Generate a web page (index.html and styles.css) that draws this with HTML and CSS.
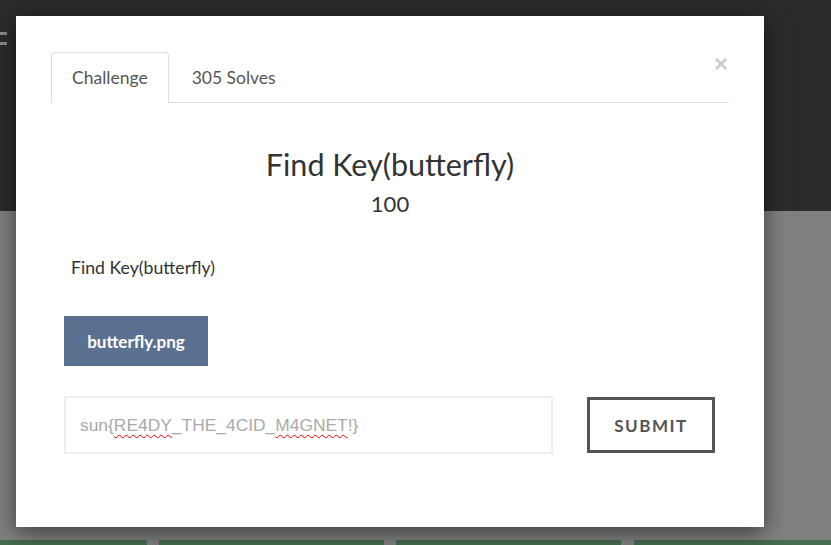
FILE: index.html
```html
<!DOCTYPE html>
<html lang="en">
<head>
<meta charset="utf-8">
<title>Find Key(butterfly)</title>
<link rel="stylesheet" href="styles.css">
</head>
<body>
<div class="page">
  <header class="navbar">
    <span class="toggle"><i class="bar"></i><i class="bar"></i></span>
  </header>
  <main class="content">
    <div class="cards">
      <div class="card c1"></div>
      <div class="card c2"></div>
      <div class="card c3"></div>
      <div class="card c4"></div>
    </div>
  </main>
</div>

<div class="modal" role="dialog">
  <button class="close" type="button" aria-label="Close">&times;</button>
  <ul class="tabs">
    <li class="tab active">Challenge</li>
    <li class="tab">305 Solves</li>
  </ul>
  <div class="tab-body">
    <h3 class="title">Find Key(butterfly)</h3>
    <h4 class="value">100</h4>
    <p class="desc">Find Key(butterfly)</p>
    <a class="file-btn" href="#">butterfly.png</a>
    <form class="answer-row">
      <div class="answer-input"><span>sun{</span><span class="typo">RE4DY</span><span>_THE_4CID_</span><span class="typo">M4GNET</span><span>!}</span></div>
      <button class="submit" type="button">SUBMIT</button>
    </form>
  </div>
</div>
</body>
</html>
```
FILE: styles.css
```css
* { box-sizing: border-box; }
html, body { margin: 0; padding: 0; }
body {
  width: 831px;
  height: 545px;
  overflow: hidden;
  position: relative;
  background: #808080;
  font-family: "Lato", "Open Sans", sans-serif;
}
.page { display: flex; flex-direction: column; height: 545px; }
.navbar {
  height: 211px;
  background: #2b2b2b;
  padding-top: 32px;
}
.toggle { display: flex; flex-direction: column; gap: 7px; width: 7px; }
.bar { display: block; height: 3px; width: 7px; background: #8a8a8a; }
.content { flex: 1; padding-top: 329px; }
.cards { display: flex; gap: 12px; }
.card { height: 5px; background: #466b4e; }
.c1 { width: 147px; }
.c2 { width: 225px; }
.c3 { width: 225px; }
.c4 { flex: 1; margin-left: 1px; }

.modal {
  position: absolute;
  left: 16px;
  top: 16px;
  width: 748px;
  height: 511px;
  background: #fff;
  box-shadow: 0 5px 22px rgba(0,0,0,0.55);
  padding: 36px 35px 0;
  color: #333;
}
.close {
  position: absolute;
  right: 36px;
  top: 36px;
  border: 0;
  background: none;
  padding: 0;
  font-family: "Liberation Sans", sans-serif;
  font-size: 24px;
  font-weight: 700;
  line-height: 24px;
  color: #cdcdcd;
}
.tabs {
  list-style: none;
  margin: 0;
  padding: 0;
  display: flex;
  height: 51px;
  border-bottom: 1px solid #ddd;
}
.tab {
  height: 51px;
  margin-bottom: -1px;
  padding: 0 20px;
  border: 1px solid transparent;
  border-radius: 4px 4px 0 0;
  font-size: 17.5px;
  line-height: 49px;
  color: #555;
  margin-right: 2px;
}
.tab.active {
  border-color: #ddd;
  border-bottom-color: #fff;
}
.tab-body { padding: 0 13px; }
.title {
  margin: 44px 0 0;
  text-align: center;
  font-size: 30.5px;
  font-weight: 400;
  line-height: 34px;
  color: #333;
}
.value {
  margin: 11px 0 0;
  text-align: center;
  font-size: 22px;
  font-weight: 400;
  line-height: 24px;
  color: #333;
}
.desc {
  margin: 42px 0 0 7px;
  font-size: 17.7px;
  line-height: 20px;
  color: #333;
}
.file-btn {
  display: inline-flex;
  align-items: center;
  justify-content: center;
  margin-top: 38px;
  width: 144px;
  height: 50px;
  background: #5b7090;
  color: #fff;
  font-weight: 700;
  font-size: 17px;
  text-decoration: none;
}
.answer-row {
  display: flex;
  align-items: center;
  margin: 30px 0 0;
  gap: 34px;
}
.answer-input {
  width: 489px;
  height: 58px;
  border: 2px solid #eee;
  padding: 0 14px;
  display: flex;
  align-items: center;
  font-family: "Liberation Sans", Arial, sans-serif;
  font-size: 17.4px;
  color: #aaa;
}
.typo {
  text-decoration: underline wavy #e00;
  text-decoration-thickness: 1px;
  text-underline-offset: 3px;
}
.submit {
  width: 128px;
  height: 56px;
  border: 3px solid #555;
  background: #fff;
  font-family: "Lato", sans-serif;
  font-weight: 700;
  font-size: 17px;
  letter-spacing: 1.5px;
  color: #555;
  padding: 0;
}
```
